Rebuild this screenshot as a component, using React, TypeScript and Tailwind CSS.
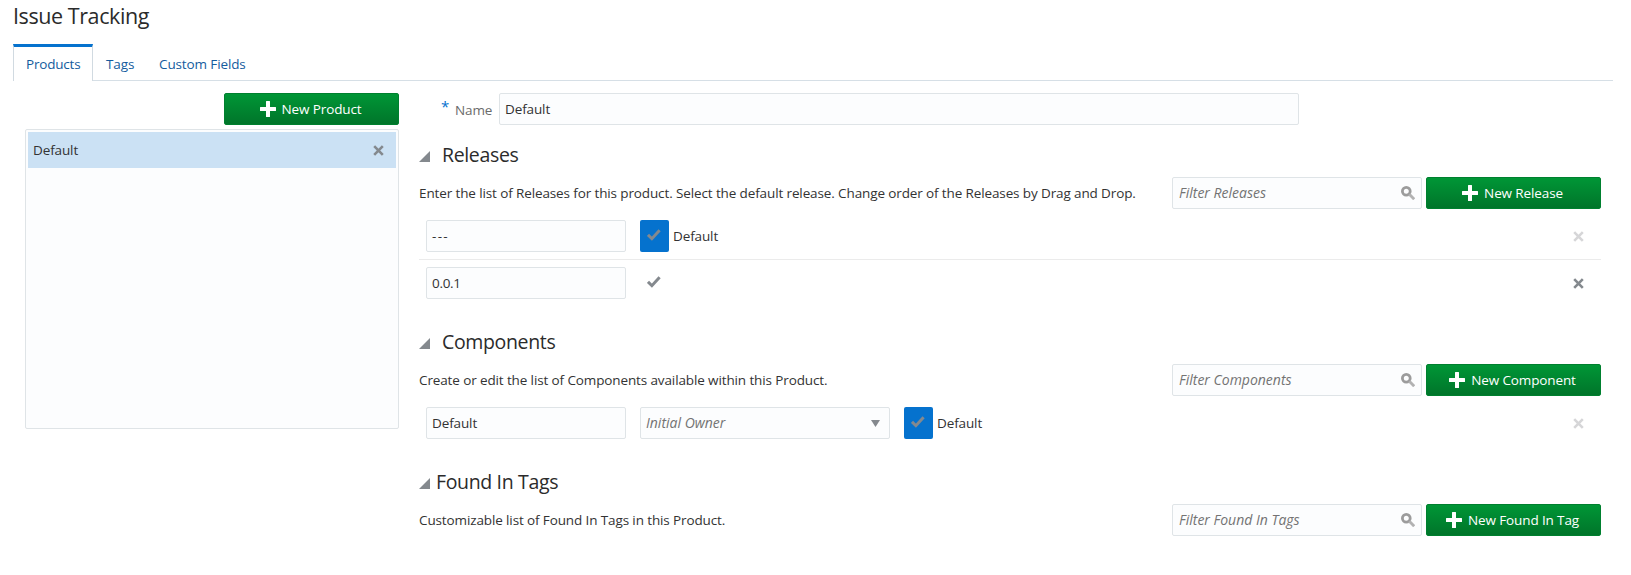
import type { ReactNode } from 'react';

const fieldClass =
  'h-8 rounded-xs border border-[#dfe4e7] bg-[#fcfdfe] px-[5px] pb-[1px] text-[13.5px] text-[#333333] outline-none placeholder:text-[14px] placeholder:italic placeholder:tracking-normal placeholder:text-[#737373]';

function PlusIcon() {
  return (
    <svg className="size-4 shrink-0" viewBox="0 0 16 16" fill="#fff">
      <path d="M6.5 0h3a.5.5 0 0 1 .5.5V6h5.500a.5.5 0 0 1 .5.5v3a.5.5 0 0 1-.5.5H10v5.500a.5.5 0 0 1-.5.5h-3a.5.5 0 0 1-.5-.5V10H.5a.5.5 0 0 1-.5-.5v-3A.5.5 0 0 1 .5 6H6V.5a.5.5 0 0 1 .5-.5z" />
    </svg>
  );
}

function CrossIcon({ className }: { className: string }) {
  return (
    <svg className={`size-[11px] shrink-0 ${className}`} viewBox="0 0 11 11">
      <path d="M1.200 1.200l8.600 8.600M9.800 1.200L1.200 9.800" stroke="currentColor" strokeWidth="2.600" fill="none" />
    </svg>
  );
}

function CheckIcon() {
  return (
    <svg className="h-3 w-[14px]" viewBox="0 0 14 12" fill="none">
      <path d="M1 5.800l3.900 3.900L12.600 1.300" stroke="#84898e" strokeWidth="3" />
    </svg>
  );
}

function SearchIcon() {
  return (
    <svg className="size-[14px] shrink-0" viewBox="0 0 14 14" fill="none">
      <circle cx="5.300" cy="5.300" r="3.900" stroke="#9c9c9c" strokeWidth="2.800" />
      <path d="M8.300 8.300l4.900 4.900" stroke="#b2b2b2" strokeWidth="2.900" />
    </svg>
  );
}

function AddButton({ label }: { label: string }) {
  return (
    <button className="flex h-8 w-[175px] shrink-0 items-center justify-center gap-[6px] rounded-xs border border-[#00802f] bg-linear-to-b from-[#009636] to-[#00752a] pr-[2px] text-[13.5px] tracking-[-0.12px] text-white">
      <PlusIcon />
      <span>{label}</span>
    </button>
  );
}

function FilterField({ placeholder }: { placeholder: string }) {
  return (
    <label className="relative mr-1 w-[250px] shrink-0">
      <input className={`${fieldClass} w-full pl-[6px]`} placeholder={placeholder} />
      <span className="absolute top-[9px] right-[7px]">
        <SearchIcon />
      </span>
    </label>
  );
}

function DefaultToggle({ active }: { active: boolean }) {
  return (
    <div className="flex items-center gap-1">
      <span className={`flex h-8 w-[29px] items-center justify-center rounded-xs pr-px pb-0.5 ${active ? 'bg-[#0572ce]' : ''}`}>
        <CheckIcon />
      </span>
      {active && <span className="pt-px">Default</span>}
    </div>
  );
}

function Section(props: {
  title: string;
  description: string;
  filter: string;
  action: string;
  tight?: boolean;
  children?: ReactNode;
}) {
  return (
    <section>
      <h2 className="flex h-10 items-center text-[19.5px] tracking-[-0.35px] text-[#2b2b2b]">
        <svg className="-mt-0.5 h-[11px] w-[11px]" viewBox="0 0 11 11">
          <path d="M11 0v11H0z" fill="#84898e" />
        </svg>
        <span className={`-mt-1 ${props.tight ? 'ml-[6px]' : 'ml-[12px]'}`}>{props.title}</span>
      </h2>
      <div className="flex h-8 items-center">
        <p className="flex-1 pt-px">{props.description}</p>
        <FilterField placeholder={props.filter} />
        <AddButton label={props.action} />
      </div>
      {props.children && <div className="mt-1 mb-[18px]">{props.children}</div>}
    </section>
  );
}

export default function App() {
  return (
    <main className="h-[575px] bg-white pr-[18px] pl-[13px] font-['Open_Sans',sans-serif] text-[13.5px] tracking-[-0.12px] text-[#333333]">
      <h1 className="h-11 text-[21.5px] leading-[32px] tracking-[-0.42px] text-[#2b2b2b]">Issue Tracking</h1>
      <nav className="flex h-[37px] border-b border-[#d6dfe6] text-[#145c9e]">
        <a className="-mb-px h-[37px] w-20 border-x border-t-3 border-x-[#d1dae1] border-t-[#0572ce] bg-white pl-3 leading-[34px] tracking-[-0.2px]">
          Products
        </a>
        <a className="w-[53px] pl-[13px] leading-[40px]">Tags</a>
        <a className="pl-[13px] leading-[40px]">Custom Fields</a>
      </nav>
      <div className="flex pt-3 pr-3 pl-3">
        <aside className="flex w-[374px] flex-col items-end">
          <AddButton label="New Product" />
          <div className="mt-1 h-[300px] w-full rounded-xs border border-[#dfe4e7] bg-[#fcfdfe] p-0.5">
            <div className="flex h-9 items-center justify-between bg-[#cbe1f4] pr-[12px] pl-[5px]">
              <span>Default</span>
              <CrossIcon className="text-[#84898e]" />
            </div>
          </div>
        </aside>
        <div className="ml-5 flex-1">
          <label className="mb-3 flex h-8 items-center">
            <span className="w-[36px] pb-1.5 pl-[22px] text-[15px] text-[#0572ce]">*</span>
            <span className="w-[44px] pt-0.5 text-[#6b6b6b]">Name</span>
            <input className={`${fieldClass} w-[800px] tracking-[-0.12px]`} defaultValue="Default" />
          </label>
          <Section
            title="Releases"
            description="Enter the list of Releases for this product. Select the default release. Change order of the Releases by Drag and Drop."
            filter="Filter Releases"
            action="New Release"
          >
            <div className="flex h-[47px] items-center justify-between border-b border-[#ebebeb] pr-[17px] pl-[7px]">
              <div className="flex gap-[14px]">
                <input className={`${fieldClass} w-[200px] tracking-[1.3px]`} defaultValue="---" />
                <DefaultToggle active />
              </div>
              <CrossIcon className="text-[#d6d6d8]" />
            </div>
            <div className="flex h-[46px] items-center justify-between pr-[17px] pl-[7px]">
              <div className="flex gap-[14px]">
                <input className={`${fieldClass} w-[200px] tracking-[-0.3px]`} defaultValue="0.0.1" />
                <DefaultToggle active={false} />
              </div>
              <CrossIcon className="text-[#84898e]" />
            </div>
          </Section>
          <Section
            title="Components"
            description="Create or edit the list of Components available within this Product."
            filter="Filter Components"
            action="New Component"
          >
            <div className="flex h-[46px] items-center justify-between pr-[17px] pl-[7px]">
              <div className="flex gap-[14px]">
                <input className={`${fieldClass} w-[200px] tracking-[-0.12px]`} defaultValue="Default" />
                <div className={`${fieldClass} flex w-[250px] items-center justify-between pr-[9px]`}>
                  <span className="text-[14px] tracking-normal text-[#737373] italic">Initial Owner</span>
                  <svg className="mt-0.5 h-[7px] w-[9px]" viewBox="0 0 9 7">
                    <path d="M0 0h9L4.500 7z" fill="#84898e" />
                  </svg>
                </div>
                <DefaultToggle active />
              </div>
              <CrossIcon className="text-[#d6d6d8]" />
            </div>
          </Section>
          <Section
            title="Found In Tags"
            description="Customizable list of Found In Tags in this Product."
            filter="Filter Found In Tags"
            action="New Found In Tag"
            tight
          />
        </div>
      </div>
    </main>
  );
}
